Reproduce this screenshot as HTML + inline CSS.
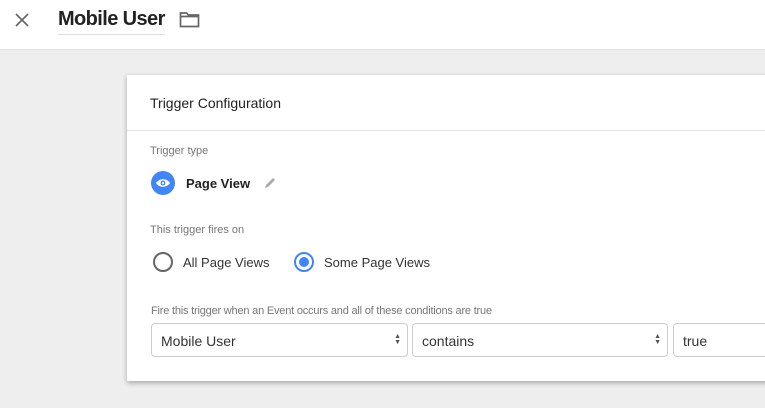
<!DOCTYPE html>
<html><head><style>
*{margin:0;padding:0;box-sizing:border-box}
body{width:765px;height:408px;overflow:hidden;background:#eeeeee;font-family:"Liberation Sans",Arial,sans-serif;position:relative}
.top{position:absolute;left:0;top:0;width:765px;height:50px;background:#fff;border-bottom:1px solid #e0e0e0}
.t{position:absolute}
.card{position:absolute;left:127px;top:75px;width:660px;height:306px;background:#fff;box-shadow:0 2px 5px rgba(0,0,0,.3)}
.sel{position:absolute;top:323px;height:34px;border:1px solid #ccc;border-radius:4px;background:#fff;font-size:14px;color:#333;padding:9px 0 0 9px}
.arr{position:absolute;right:6px;top:10px;font-size:7px;line-height:6px;color:#555}
</style></head><body>
<div class="top">
<svg class="t" style="left:13px;top:11px" width="18" height="18" viewBox="0 0 18 18"><path d="M3 3L15 15M15 3L3 15" stroke="#666" stroke-width="1.6"/></svg>
<div class="t" style="left:58px;top:8px;font-size:20px;font-weight:bold;color:#222;letter-spacing:-0.6px">Mobile User</div>
<div class="t" style="left:58px;top:34px;width:107px;height:1px;background:#ddd"></div>
<svg class="t" style="left:179px;top:11px" width="21" height="17" viewBox="0 0 21 17"><path d="M1.5 2h6l2 2h10v11.5h-18z M1.5 5.5h18" fill="none" stroke="#666" stroke-width="1.7"/></svg>
</div>
<div class="card">
<div class="t" style="left:23px;top:20px;font-size:14px;color:#222">Trigger Configuration</div>
<div class="t" style="left:0;top:55px;width:660px;height:1px;background:#e0e0e0"></div>
<div class="t" style="left:23px;top:70px;font-size:11px;color:#777">Trigger type</div>
<div class="t" style="left:24px;top:96px;width:24px;height:24px;border-radius:50%;background:#4285f4"></div>
<svg class="t" style="left:28px;top:102px" width="16" height="12" viewBox="0 0 16 12"><path d="M1 6C4 1 12 1 15 6C12 11 4 11 1 6z" fill="#fff"/><circle cx="8" cy="6" r="2.4" fill="#4285f4"/><circle cx="8" cy="6" r="1.1" fill="#fff"/></svg>
<div class="t" style="left:59px;top:101px;font-size:13px;font-weight:bold;color:#222">Page View</div>
<svg class="t" style="left:136px;top:101px" width="14" height="14" viewBox="0 0 14 14"><path d="M2 12l1-3 7-7 2 2-7 7z" fill="#aaa"/></svg>
<div class="t" style="left:23px;top:149px;font-size:11px;color:#777">This trigger fires on</div>
<div class="t" style="left:26px;top:177px;width:20px;height:20px;border-radius:50%;border:2px solid #666"></div>
<div class="t" style="left:56px;top:180px;font-size:13px;color:#333">All Page Views</div>
<div class="t" style="left:167px;top:177px;width:20px;height:20px;border-radius:50%;border:2px solid #4285f4"></div>
<div class="t" style="left:172px;top:182px;width:10px;height:10px;border-radius:50%;background:#4285f4"></div>
<div class="t" style="left:197px;top:180px;font-size:13px;color:#333">Some Page Views</div>
<div class="t" style="left:24px;top:230px;font-size:11px;color:#777;letter-spacing:-0.2px">Fire this trigger when an Event occurs and all of these conditions are true</div>
</div>
<div class="sel" style="left:151px;width:257px">Mobile User<div class="arr">▲<br>▼</div></div>
<div class="sel" style="left:412px;width:256px">contains<div class="arr">▲<br>▼</div></div>
<div class="sel" style="left:673px;width:110px">true</div>
</body></html>
